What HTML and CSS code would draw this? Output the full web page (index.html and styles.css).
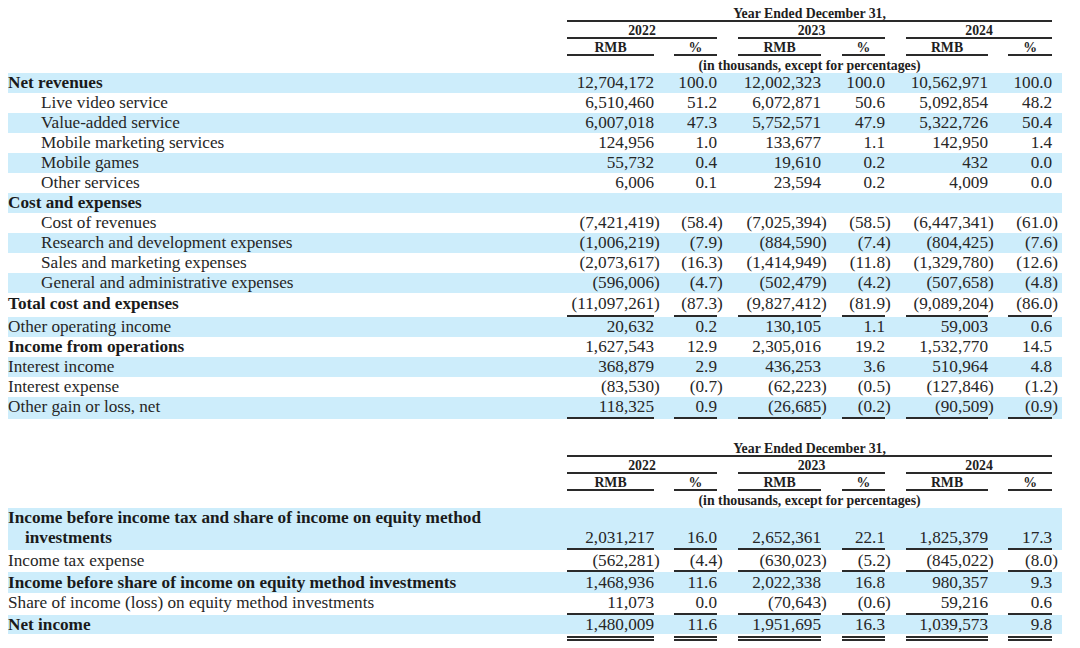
FILE: index.html
```html
<!DOCTYPE html>
<html lang="en">
<head>
<meta charset="utf-8">
<title>Results of Operations</title>
<link rel="stylesheet" href="styles.css">
</head>
<body>
<div class="page">
<table class="fin">
  <colgroup>
    <col class="c-lab"><col class="c-rmb1"><col class="c-s20"><col class="c-pct43"><col class="c-s21">
    <col class="c-rmb2"><col class="c-s21"><col class="c-pct43"><col class="c-s21">
    <col class="c-rmb3"><col class="c-s20"><col class="c-pct44"><col class="c-tail">
  </colgroup>
  <thead>
    <tr><td></td><td colspan="11" class="r">Year Ended December 31,</td><td></td></tr>
    <tr><td></td><td colspan="3" class="r">2022</td><td></td><td colspan="3" class="r">2023</td><td></td><td colspan="3" class="r">2024</td><td></td></tr>
    <tr><td></td><td class="r">RMB</td><td></td><td class="r">%</td><td></td><td class="r">RMB</td><td></td><td class="r">%</td><td></td><td class="r">RMB</td><td></td><td class="r">%</td><td></td></tr>
    <tr class="note"><td></td><td colspan="11">(in thousands, except for percentages)</td><td></td></tr>
  </thead>
  <tbody>
    <tr class="b"><td class="lab bold">Net revenues</td><td class="n">12,704,172</td><td></td><td class="n">100.0</td><td></td><td class="n">12,002,323</td><td></td><td class="n">100.0</td><td></td><td class="n">10,562,971</td><td></td><td class="n">100.0</td><td></td></tr>
    <tr><td class="lab ind">Live video service</td><td class="n">6,510,460</td><td></td><td class="n">51.2</td><td></td><td class="n">6,072,871</td><td></td><td class="n">50.6</td><td></td><td class="n">5,092,854</td><td></td><td class="n">48.2</td><td></td></tr>
    <tr class="b"><td class="lab ind">Value-added service</td><td class="n">6,007,018</td><td></td><td class="n">47.3</td><td></td><td class="n">5,752,571</td><td></td><td class="n">47.9</td><td></td><td class="n">5,322,726</td><td></td><td class="n">50.4</td><td></td></tr>
    <tr><td class="lab ind">Mobile marketing services</td><td class="n">124,956</td><td></td><td class="n">1.0</td><td></td><td class="n">133,677</td><td></td><td class="n">1.1</td><td></td><td class="n">142,950</td><td></td><td class="n">1.4</td><td></td></tr>
    <tr class="b"><td class="lab ind">Mobile games</td><td class="n">55,732</td><td></td><td class="n">0.4</td><td></td><td class="n">19,610</td><td></td><td class="n">0.2</td><td></td><td class="n">432</td><td></td><td class="n">0.0</td><td></td></tr>
    <tr><td class="lab ind">Other services</td><td class="n">6,006</td><td></td><td class="n">0.1</td><td></td><td class="n">23,594</td><td></td><td class="n">0.2</td><td></td><td class="n">4,009</td><td></td><td class="n">0.0</td><td></td></tr>
    <tr class="b"><td class="lab bold">Cost and expenses</td><td class="n"></td><td></td><td class="n"></td><td></td><td class="n"></td><td></td><td class="n"></td><td></td><td class="n"></td><td></td><td class="n"></td><td></td></tr>
    <tr><td class="lab ind">Cost of revenues</td><td class="n">(7,421,419<span class="rp">)</span></td><td></td><td class="n">(58.4<span class="rp">)</span></td><td></td><td class="n">(7,025,394<span class="rp">)</span></td><td></td><td class="n">(58.5<span class="rp">)</span></td><td></td><td class="n">(6,447,341<span class="rp">)</span></td><td></td><td class="n">(61.0<span class="rp">)</span></td><td></td></tr>
    <tr class="b"><td class="lab ind">Research and development expenses</td><td class="n">(1,006,219<span class="rp">)</span></td><td></td><td class="n">(7.9<span class="rp">)</span></td><td></td><td class="n">(884,590<span class="rp">)</span></td><td></td><td class="n">(7.4<span class="rp">)</span></td><td></td><td class="n">(804,425<span class="rp">)</span></td><td></td><td class="n">(7.6<span class="rp">)</span></td><td></td></tr>
    <tr><td class="lab ind">Sales and marketing expenses</td><td class="n">(2,073,617<span class="rp">)</span></td><td></td><td class="n">(16.3<span class="rp">)</span></td><td></td><td class="n">(1,414,949<span class="rp">)</span></td><td></td><td class="n">(11.8<span class="rp">)</span></td><td></td><td class="n">(1,329,780<span class="rp">)</span></td><td></td><td class="n">(12.6<span class="rp">)</span></td><td></td></tr>
    <tr class="b"><td class="lab ind">General and administrative expenses</td><td class="n">(596,006<span class="rp">)</span></td><td></td><td class="n">(4.7<span class="rp">)</span></td><td></td><td class="n">(502,479<span class="rp">)</span></td><td></td><td class="n">(4.2<span class="rp">)</span></td><td></td><td class="n">(507,658<span class="rp">)</span></td><td></td><td class="n">(4.8<span class="rp">)</span></td><td></td></tr>
    <tr class="u tall"><td class="lab bold">Total cost and expenses</td><td class="n">(11,097,261<span class="rp">)</span></td><td></td><td class="n">(87.3<span class="rp">)</span></td><td></td><td class="n">(9,827,412<span class="rp">)</span></td><td></td><td class="n">(81.9<span class="rp">)</span></td><td></td><td class="n">(9,089,204<span class="rp">)</span></td><td></td><td class="n">(86.0<span class="rp">)</span></td><td></td></tr>
    <tr class="b"><td class="lab">Other operating income</td><td class="n">20,632</td><td></td><td class="n">0.2</td><td></td><td class="n">130,105</td><td></td><td class="n">1.1</td><td></td><td class="n">59,003</td><td></td><td class="n">0.6</td><td></td></tr>
    <tr><td class="lab bold">Income from operations</td><td class="n">1,627,543</td><td></td><td class="n">12.9</td><td></td><td class="n">2,305,016</td><td></td><td class="n">19.2</td><td></td><td class="n">1,532,770</td><td></td><td class="n">14.5</td><td></td></tr>
    <tr class="b"><td class="lab">Interest income</td><td class="n">368,879</td><td></td><td class="n">2.9</td><td></td><td class="n">436,253</td><td></td><td class="n">3.6</td><td></td><td class="n">510,964</td><td></td><td class="n">4.8</td><td></td></tr>
    <tr><td class="lab">Interest expense</td><td class="n">(83,530<span class="rp">)</span></td><td></td><td class="n">(0.7<span class="rp">)</span></td><td></td><td class="n">(62,223<span class="rp">)</span></td><td></td><td class="n">(0.5<span class="rp">)</span></td><td></td><td class="n">(127,846<span class="rp">)</span></td><td></td><td class="n">(1.2<span class="rp">)</span></td><td></td></tr>
    <tr class="b u"><td class="lab">Other gain or loss, net</td><td class="n">118,325</td><td></td><td class="n">0.9</td><td></td><td class="n">(26,685<span class="rp">)</span></td><td></td><td class="n">(0.2<span class="rp">)</span></td><td></td><td class="n">(90,509<span class="rp">)</span></td><td></td><td class="n">(0.9<span class="rp">)</span></td><td></td></tr>
  </tbody>
</table>

<table class="fin second">
  <colgroup>
    <col class="c-lab"><col class="c-rmb1"><col class="c-s20"><col class="c-pct43"><col class="c-s21">
    <col class="c-rmb2"><col class="c-s21"><col class="c-pct43"><col class="c-s21">
    <col class="c-rmb3"><col class="c-s20"><col class="c-pct44"><col class="c-tail">
  </colgroup>
  <thead>
    <tr><td></td><td colspan="11" class="r">Year Ended December 31,</td><td></td></tr>
    <tr><td></td><td colspan="3" class="r">2022</td><td></td><td colspan="3" class="r">2023</td><td></td><td colspan="3" class="r">2024</td><td></td></tr>
    <tr><td></td><td class="r">RMB</td><td></td><td class="r">%</td><td></td><td class="r">RMB</td><td></td><td class="r">%</td><td></td><td class="r">RMB</td><td></td><td class="r">%</td><td></td></tr>
    <tr class="note"><td></td><td colspan="11">(in thousands, except for percentages)</td><td></td></tr>
  </thead>
  <tbody>
    <tr class="b u"><td class="lab bold wrap">Income before income tax and share of income on equity method<br><span class="cont">investments</span></td><td class="n">2,031,217</td><td></td><td class="n">16.0</td><td></td><td class="n">2,652,361</td><td></td><td class="n">22.1</td><td></td><td class="n">1,825,379</td><td></td><td class="n">17.3</td><td></td></tr>
    <tr class="u low"><td class="lab">Income tax expense</td><td class="n">(562,281<span class="rp">)</span></td><td></td><td class="n">(4.4<span class="rp">)</span></td><td></td><td class="n">(630,023<span class="rp">)</span></td><td></td><td class="n">(5.2<span class="rp">)</span></td><td></td><td class="n">(845,022<span class="rp">)</span></td><td></td><td class="n">(8.0<span class="rp">)</span></td><td></td></tr>
    <tr class="b mid"><td class="lab bold">Income before share of income on equity method investments</td><td class="n">1,468,936</td><td></td><td class="n">11.6</td><td></td><td class="n">2,022,338</td><td></td><td class="n">16.8</td><td></td><td class="n">980,357</td><td></td><td class="n">9.3</td><td></td></tr>
    <tr class="u"><td class="lab">Share of income (loss) on equity method investments</td><td class="n">11,073</td><td></td><td class="n">0.0</td><td></td><td class="n">(70,643<span class="rp">)</span></td><td></td><td class="n">(0.6<span class="rp">)</span></td><td></td><td class="n">59,216</td><td></td><td class="n">0.6</td><td></td></tr>
    <tr class="b uu"><td class="lab bold">Net income</td><td class="n">1,480,009</td><td></td><td class="n">11.6</td><td></td><td class="n">1,951,695</td><td></td><td class="n">16.3</td><td></td><td class="n">1,039,573</td><td></td><td class="n">9.8</td><td></td></tr>
  </tbody>
</table>
</div>
</body>
</html>
```

FILE: styles.css
```css
html, body {
  margin: 0;
  background: #ffffff;
}
body {
  font-family: "Liberation Serif", "Times New Roman", serif;
  color: #262626;
}
.page {
  padding: 5px 0 0 8px;
}
.fin {
  border-collapse: separate;
  border-spacing: 0;
  table-layout: fixed;
  width: 1054px;
}
.second {
  margin-top: 21px;
}
.c-lab { width: 559px; }
.c-rmb1 { width: 87px; }
.c-rmb2 { width: 83px; }
.c-rmb3 { width: 82px; }
.c-s20 { width: 20px; }
.c-s21 { width: 21px; }
.c-pct43 { width: 43px; }
.c-pct44 { width: 44px; }
.c-tail { width: 10px; }

.fin td {
  padding: 0;
  font-size: 17.2px;
  line-height: 20px;
  white-space: nowrap;
  vertical-align: bottom;
}
.fin thead td {
  font-size: 13.8px;
  font-weight: bold;
  color: #1e1e1e;
  line-height: 13px;
  padding-top: 2px;
  text-align: center;
  border-bottom: 2px solid transparent;
}
.fin thead td.r {
  border-bottom-color: #2a2a2a;
}
.fin thead tr.note td {
  line-height: 14px;
  padding-top: 3px;
  border-bottom: 0;
}

.fin tr.b td {
  background: #cdedfb;
}
.fin td.lab {
  text-align: left;
}
.fin td.ind {
  padding-left: 33px;
}
.fin td.bold {
  font-weight: bold;
  color: #1a1a1a;
}
.fin td.wrap {
  white-space: normal;
}
.cont {
  padding-left: 17px;
}
.fin td.n {
  text-align: right;
}
.rp {
  margin-right: -0.333em;
}

.fin tr.u td {
  border-bottom: 2px solid transparent;
}
.fin tr.u td.n {
  border-bottom-color: #2a2a2a;
}
.fin tr.tall td {
  line-height: 22px;
}
.fin tr.mid td {
  line-height: 21px;
}
.fin tr.low td {
  line-height: 18px;
  padding-top: 2px;
}
.fin tr.uu td {
  line-height: 19px;
  padding-bottom: 2px;
  border-bottom: 5px double transparent;
  background-clip: content-box;
}
.fin tr.uu td.n {
  border-bottom-color: #2a2a2a;
}
```
